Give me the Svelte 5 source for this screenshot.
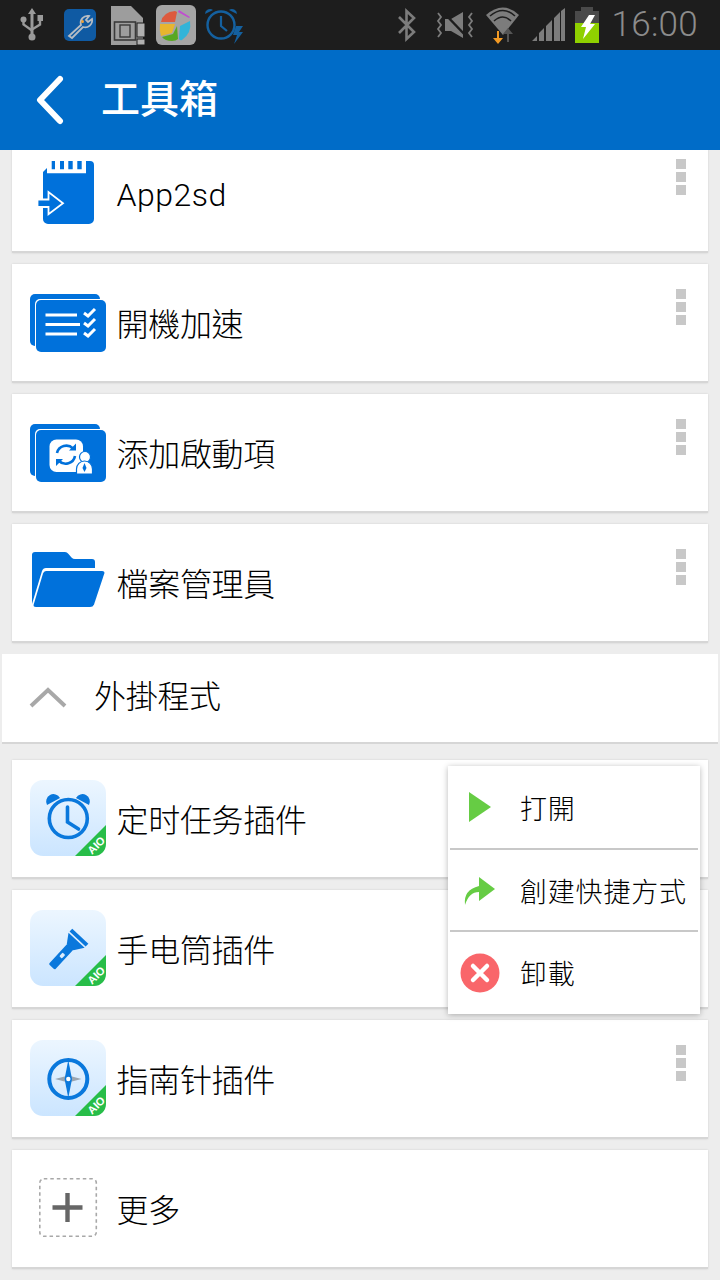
<script lang="ts">
  type Row = { label: string; icon: string };
  const tools: Row[] = [
    { label: "App2sd", icon: "sd" },
    { label: "開機加速", icon: "boost" },
    { label: "添加啟動項", icon: "startup" },
    { label: "檔案管理員", icon: "folder" },
  ];
  const plugins: Row[] = [
    { label: "定时任务插件", icon: "alarm" },
    { label: "手电筒插件", icon: "torch" },
    { label: "指南针插件", icon: "compass" },
  ];
</script>

{#snippet badge()}
  <path d="M45 76 76 45v19a12 12 0 0 1-12 12z" fill="#27bd48" />
  <text class="aio" x="0" y="0" transform="translate(69 68) rotate(-45)">AIO</text>
{/snippet}

{#snippet icon(name: string)}
  <svg class="ico" viewBox="0 0 76 76" width="76" height="76">
    {#if name === "sd"}
      <path d="M21.700 7H25V15.300H21.700zM30 7H34V15.300H30zM38.300 7H42.700V15.300H38.300zM47.300 7H51.700V15.300H47.300z" fill="#0071db" />
      <path d="M13 18l4-4v5.300H56V7h4a4 4 0 0 1 4 4v54a5 5 0 0 1-5 5H18a5 5 0 0 1-5-5z" fill="#0071db" />
      <path d="M7.500 45.500H18.500V38L33 49.300 18.500 60.300V53H7.500z" fill="#0071db" stroke="#fff" stroke-width="1.800" />
    {:else if name === "boost" || name === "startup"}
      <rect x="0" y="10" width="70" height="52" rx="5" fill="#0071db" />
      <rect x="5" y="15" width="72" height="54" rx="5" fill="#fff" />
      <rect x="6" y="16" width="70" height="52" rx="5" fill="#0071db" />
      {#if name === "boost"}
        <path d="M15.500 31H47M15.500 40.500H50M15.500 50H47" stroke="#fff" stroke-width="3" fill="none" />
        <path d="M54 29l4 3 7-7M54 39l4 3 7-7M54 49l4 3 7-7" stroke="#fff" stroke-width="3" fill="none" />
      {:else}
        <rect x="19.500" y="25.500" width="33.500" height="32.500" rx="7" fill="#fff" />
        <path d="M27 39a9.500 9.500 0 0 1 16-4.500M45 42a9.500 9.500 0 0 1-16 5" stroke="#0071db" stroke-width="2.600" fill="none" />
        <path d="M46 29.500v7h-7zM26 52v-7h7z" fill="#0071db" />
        <circle cx="55" cy="43" r="5.500" fill="#fff" stroke="#0071db" stroke-width="1.200" />
        <path d="M46.500 60v-5a8 8 0 0 1 16 0v5z" fill="#fff" stroke="#0071db" stroke-width="1.200" />
        <path d="M54.500 49l2 5-2 4-2-4z" fill="#0071db" />
      {/if}
    {:else if name === "folder"}
      <path d="M2 60V11a3 3 0 0 1 3-3h30q2 0 3.500 2l3 3.500q1.500 1.500 3.500 1.500h17a3 3 0 0 1 3 3v6H16q-3 0-4 3z" fill="#0071db" />
      <path d="M16 27h56q3 0 2.300 2.500L64 60.500Q63 63 60 63H6q-3 0-2.300-2.500L13 29.500q.800-2.500 3-2.500z" fill="#0071db" />
    {:else if name === "alarm"}
      <rect width="76" height="76" rx="13" fill="url(#tile)" />
      <path d="M17 25a7 7 0 0 1 13-7zM59 25a7 7 0 0 0-13-7z" fill="#0a78dc" />
      <circle cx="38.300" cy="38.500" r="19" fill="none" stroke="#0a78dc" stroke-width="3.600" />
      <path d="M37.500 27v15l11 7" fill="none" stroke="#0a78dc" stroke-width="3.600" stroke-linecap="round" />
      {@render badge()}
    {:else if name === "torch"}
      <rect width="76" height="76" rx="13" fill="url(#tile)" />
      <g transform="translate(36 41.500) rotate(43)">
        <rect x="-11" y="-21" width="22" height="4" fill="#0a78dc" />
        <path d="M-11-15.500H11L4.500-6H-4.500z" fill="#0a78dc" />
        <rect x="-4.200" y="-7" width="8.400" height="28" rx="1.500" fill="#0a78dc" />
        <rect x="-1.800" y="3" width="3.600" height="5" rx="1" fill="#dcecfb" />
      </g>
      {@render badge()}
    {:else if name === "compass"}
      <rect width="76" height="76" rx="13" fill="url(#tile)" />
      <circle cx="38.300" cy="39" r="19" fill="none" stroke="#0a78dc" stroke-width="4" />
      <path d="M25 39l10.500-2.800 2.800-9 2.800 9L51.500 39l-10.500 2.800-2.800 9-2.800-9z" fill="#9aa5b0" />
      <path d="M38.300 20l3.700 19-3.700 19-3.700-19z" fill="#0a78dc" />
      <circle cx="38.300" cy="39" r="2.200" fill="#fff" />
      {@render badge()}
    {:else if name === "more"}
      <rect x="9.800" y="8.800" width="56.500" height="57.500" rx="4" fill="none" stroke="#a8a8a8" stroke-width="1.600" stroke-dasharray="3.500 3" />
      <path d="M37.500 23v29M22.500 37.500h30" stroke="#666" stroke-width="4.400" fill="none" />
    {/if}
  </svg>
{/snippet}

{#snippet card(row: Row)}
  <div class="card">
    {@render icon(row.icon)}
    <span class="label">{row.label}</span>
    <span class="kebab"><i></i><i></i><i></i></span>
  </div>
{/snippet}

<div class="screen">
  <svg class="defs" width="0" height="0" aria-hidden="true">
    <defs>
      <linearGradient id="tile" x1="0" y1="0" x2="0" y2="1">
        <stop offset="0" stop-color="#ecf6ff" />
        <stop offset="1" stop-color="#cbe5ff" />
      </linearGradient>
    </defs>
  </svg>

  <div class="status">
    <div class="status-left">
      <!-- usb -->
      <svg viewBox="0 0 24 36" width="24" height="36">
        <path d="M12 1l4 6h-2.500v22h-3V7H8z" fill="#9a9a9a" />
        <circle cx="12" cy="30" r="3.500" fill="#9a9a9a" />
        <circle cx="3.500" cy="12.500" r="3" fill="#9a9a9a" />
        <rect x="17.500" y="8" width="5.500" height="6" fill="#9a9a9a" />
        <path d="M3.500 13v4.500l8.500 6M20 13v4.500l-8 5" fill="none" stroke="#9a9a9a" stroke-width="2.400" />
      </svg>
      <!-- wrench -->
      <svg viewBox="0 0 32 32" width="32" height="32">
        <rect width="32" height="32" rx="5" fill="#0f5aa3" />
        <path d="M5 27l12-11a7 7 0 0 1 8-9l-3 4 2 2 4-3a7 7 0 0 1-9 8L8 29z" fill="none" stroke="#b5bcc4" stroke-width="1.800" />
        <circle cx="18.500" cy="12.500" r="1.500" fill="#f0a23a" />
      </svg>
      <!-- sim warning -->
      <svg viewBox="0 0 34 39" width="34" height="39">
        <path d="M0 0h20l12 12v27H0z" fill="#9d9d9d" />
        <rect x="3.500" y="16" width="21" height="18" fill="none" stroke="#3a3a3a" stroke-width="1.600" />
        <rect x="9" y="19" width="10" height="12" fill="none" stroke="#3a3a3a" stroke-width="1.400" />
        <rect x="26" y="17" width="8" height="14" fill="#b0b0b0" stroke="#1d1d1d" />
        <rect x="26" y="33" width="8" height="6" fill="#b0b0b0" stroke="#1d1d1d" />
      </svg>
      <!-- app store tile -->
      <svg viewBox="0 0 40 40" width="40" height="40">
        <rect width="40" height="40" rx="6" fill="#a5a5a5" />
        <path d="M5 17q2-10 14-11l2 1-2 10z" fill="#dd5a3e" />
        <path d="M4 19l15 0-3 9-11 3q-2-6-1-12z" fill="#e8b52e" />
        <path d="M6 32l11-3 4-8 1 13q-2 2-6 2-7 0-10-4z" fill="#58a822" />
        <path d="M24 21l10-5q2 12-8 19-3 1-3-2z" fill="#33b4d8" />
        <path d="M23 5l11 7-1 1-11-6z" fill="#c04ed0" />
      </svg>
      <!-- alarm charge -->
      <svg viewBox="0 0 40 40" width="40" height="40">
        <circle cx="17" cy="20" r="13.500" fill="none" stroke="#14609f" stroke-width="2.400" />
        <path d="M17 11v10l6 5" fill="none" stroke="#14609f" stroke-width="2.200" />
        <path d="M1 9a5 5 0 0 1 8-4zM33 9a5 5 0 0 0-8-4z" fill="#14609f" />
        <path d="M32 21h7l-4 6h4l-9 12 3-9h-4z" fill="#14609f" />
      </svg>
    </div>
    <div class="status-right">
      <!-- bluetooth -->
      <svg class="bt" viewBox="0 0 20 34" width="20" height="34">
        <path d="M2 9l15 15-7.500 7V3L17 10 2 25" fill="none" stroke="#7c7c7c" stroke-width="2.600" />
      </svg>
      <!-- vibrate / mute -->
      <svg viewBox="0 0 38 30" width="38" height="30">
        <path d="M9 9h6l12-7v26l-12-7H9z" fill="#7c7c7c" />
        <path d="M8 3l23 24" stroke="#1d1d1d" stroke-width="2.500" />
        <path d="M2 3l3 4-3 4 3 4-3 4 3 4-3 4M36 3l-3 4 3 4-3 4 3 4-3 4 3 4" fill="none" stroke="#7c7c7c" stroke-width="1.800" />
      </svg>
      <!-- wifi -->
      <svg viewBox="0 0 34 38" width="34" height="38">
        <path d="M0 9Q17-6 33 9l-16 20z" fill="#7c7c7c" />
        <path d="M4 10Q17-1 29 10M8 15Q17 7 25 15" fill="none" stroke="#1d1d1d" stroke-width="1.600" />
        <path d="M11 25v7h-4l5 6 5-6h-4v-7z" fill="#f39a24" />
        <path d="M21 36v-8h-4l5-6 5 6h-4v8z" fill="#555" />
      </svg>
      <!-- signal -->
      <svg class="sig" viewBox="0 0 34 34" width="34" height="34">
        <path d="M0 33 5 28v5zM7 33V25l5-5v13zM14 33V18l6-6v21zM22 33V10l6-6v29zM29 33V3l4-3v33z" fill="#7c7c7c" />
      </svg>
      <!-- battery -->
      <svg viewBox="0 0 24 36" width="24" height="36">
        <rect x="6" y="0" width="12" height="4" fill="#4a4a4a" />
        <rect x="0" y="4" width="24" height="12" fill="#4a4a4a" />
        <rect x="0" y="16" width="24" height="20" fill="#8fd000" />
        <path d="M14 8h6l-5 9h5L8 32l3-12H6z" fill="#fff" />
      </svg>
      <span class="time">16:00</span>
    </div>
  </div>

  <header class="bar">
    <svg class="back" viewBox="0 0 32 50" width="32" height="50">
      <path d="M26 4 6 25l20 21" fill="none" stroke="#fff" stroke-width="6" stroke-linecap="round" stroke-linejoin="round" />
    </svg>
    <span class="title">工具箱</span>
  </header>

  <main class="list">
    <div class="scroll">
      {#each tools as row}
        {@render card(row)}
      {/each}

      <div class="group">
        <svg viewBox="0 0 38 22" width="38" height="22">
          <path d="M2 19 19 3l17 16" fill="none" stroke="#a8a8a8" stroke-width="4" />
        </svg>
        <span class="label">外掛程式</span>
      </div>

      {#each plugins as row}
        {@render card(row)}
      {/each}

      <div class="card">
        {@render icon("more")}
        <span class="label">更多</span>
      </div>
    </div>

    <div class="menu">
      <div class="item">
        <span class="mi">
          <svg viewBox="0 0 40 40" width="40" height="40"><path d="M9 5l22 15L9 35z" fill="#66cc44" /></svg>
        </span>
        <span class="mt">打開</span>
      </div>
      <div class="item">
        <span class="mi">
          <svg viewBox="0 0 40 40" width="40" height="40"><path d="M5 35q-2-15 14-19V7l16 12-16 12v-9Q9 22 5 35z" fill="#66cc44" /></svg>
        </span>
        <span class="mt">創建快捷方式</span>
      </div>
      <div class="item">
        <span class="mi">
          <svg viewBox="0 0 40 40" width="40" height="40">
            <circle cx="20" cy="20" r="19.500" fill="#f9666a" />
            <path d="M13 13l14 14M27 13 13 27" stroke="#fff" stroke-width="4.500" stroke-linecap="round" />
          </svg>
        </span>
        <span class="mt">卸載</span>
      </div>
    </div>
  </main>
</div>

<style>
  :global(body) {
    background: #ededed;
  }
  .screen {
    width: 720px;
    height: 1280px;
    display: flex;
    flex-direction: column;
    overflow: hidden;
    background: #ededed;
    font-family: Roboto, "Noto Sans CJK TC", sans-serif;
    color: #000;
  }
  .defs {
    position: absolute;
  }
  .status {
    height: 50px;
    flex-shrink: 0;
    background: #1d1d1d;
    display: flex;
    align-items: center;
    justify-content: space-between;
    padding: 0 22px 0 20px;
  }
  .status-left,
  .status-right {
    display: flex;
    align-items: center;
  }
  .status-left {
    gap: 16px;
  }
  .status-left svg:nth-child(2) {
    margin-left: 4px;
  }
  .status-left svg:nth-child(3) {
    margin-left: -1px;
  }
  .status-left svg:nth-child(4) {
    margin-left: -5px;
  }
  .status-left svg:nth-child(5) {
    margin-left: -8px;
  }
  .status-right {
    gap: 12px;
  }
  .bt {
    margin-right: 7px;
  }
  .sig {
    margin-right: -3px;
  }
  .time {
    font-family: Roboto, sans-serif;
    font-size: 35px;
    color: #8c8c8c;
    font-weight: 300;
    line-height: 50px;
    letter-spacing: 0.300px;
  }
  .bar {
    height: 100px;
    flex-shrink: 0;
    background: #006cc8;
    display: flex;
    align-items: center;
    padding-left: 34px;
    gap: 35px;
    z-index: 2;
  }
  .back {
    flex-shrink: 0;
  }
  .title {
    color: #fff;
    font-size: 39px;
    font-weight: 500;
    line-height: 100px;
    margin-top: -1px;
  }
  .list {
    position: relative;
    flex: 1;
    overflow: hidden;
  }
  .scroll {
    display: flex;
    flex-direction: column;
    gap: 11px;
    margin-top: -16px;
    padding: 0 12px;
  }
  .card {
    position: relative;
    height: 97px;
    flex-shrink: 0;
    border-bottom: 2px solid #d6d6d6;
    background: #fff;
    box-shadow: 0 0 2px rgba(0, 0, 0, 0.12);
    display: flex;
    align-items: flex-start;
    padding: 20px 0 0 18px;
  }
  .card:first-child .label {
    letter-spacing: 0.500px;
  }
  .ico {
    flex-shrink: 0;
  }
  .label {
    font-size: 32px;
    font-weight: 300;
    margin-left: 10.500px;
    line-height: 82px;
    white-space: nowrap;
    letter-spacing: -0.300px;
  }
  .aio {
    fill: #fff;
    font-family: "Liberation Sans", sans-serif;
    font-weight: 700;
    font-size: 11px;
    text-anchor: middle;
  }
  .kebab {
    position: absolute;
    top: 25px;
    right: 22px;
    display: flex;
    flex-direction: column;
    gap: 3px;
  }
  .kebab i {
    display: block;
    width: 10px;
    height: 10px;
    background: #c8c8c8;
  }
  .group {
    margin: 0 -10px 5px;
    height: 88px;
    flex-shrink: 0;
    border-bottom: 2px solid #d6d6d6;
    background: #fff;
    display: flex;
    align-items: center;
    padding-left: 27px;
    gap: 27px;
  }
  .group .label {
    margin-left: 0;
    margin-top: -3px;
    line-height: 76px;
  }
  .menu {
    position: absolute;
    left: 448px;
    top: 616px;
    width: 252px;
    height: 248px;
    background: #fff;
    box-shadow: 0 1px 6px rgba(0, 0, 0, 0.28);
    display: flex;
    flex-direction: column;
    padding: 0 2px;
    box-sizing: border-box;
  }
  .item {
    height: 82px;
    flex-shrink: 0;
    display: flex;
    align-items: center;
    padding-left: 10px;
    gap: 20px;
    border-bottom: 2px solid #c8c8c8;
  }
  .item:nth-child(2) {
    height: 80px;
  }
  .item:last-child {
    border-bottom: none;
  }
  .item:last-child .mt {
    margin-top: -2px;
  }
  .mi {
    display: flex;
    width: 40px;
    height: 40px;
  }
  .mt {
    font-size: 27px;
    font-weight: 300;
    letter-spacing: 0.800px;
    white-space: nowrap;
  }
</style>
